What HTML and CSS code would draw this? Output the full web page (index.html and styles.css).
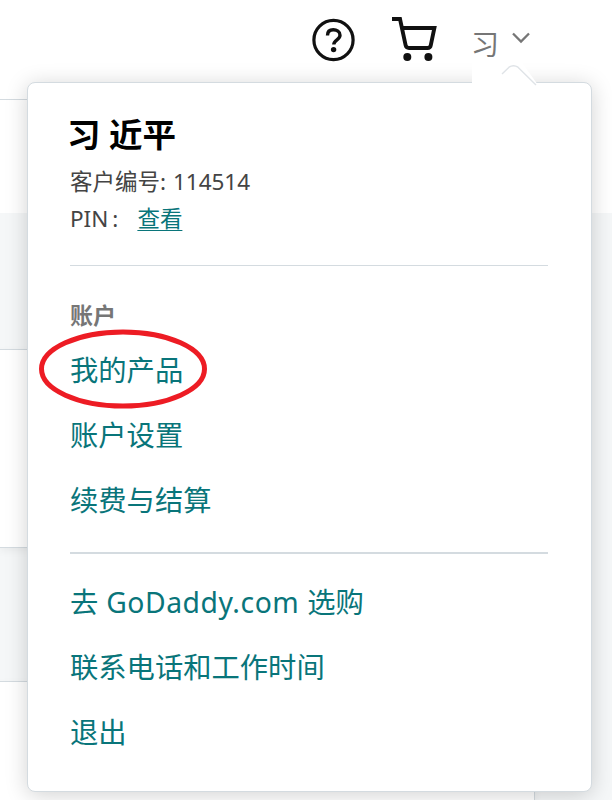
FILE: index.html
```html
<!DOCTYPE html>
<html lang="zh-CN">
<head>
<meta charset="utf-8">
<title>账户</title>
<link rel="stylesheet" href="styles.css">
</head>
<body>
<header class="topbar">
  <svg class="help" viewBox="0 0 44 44" width="44" height="44">
    <circle cx="22.500" cy="22" r="19.600" fill="none" stroke="#111" stroke-width="3.200"/>
    <path d="M16.500 17.500C16.500 13.500 19 11.800 22.300 11.800s6.700 2 6.700 5.400c0 4.600-6.200 4.600-6.200 9.400" fill="none" stroke="#111" stroke-width="3.400"/>
    <circle cx="22.600" cy="31.600" r="2.700" fill="#111"/>
  </svg>
  <svg class="cart" viewBox="0 0 46 46" width="46" height="46">
    <path d="M0 3H8L13.600 29.200Q14.200 32 17 32H35.500Q38.300 32 38.800 29.200L42.400 12H10" fill="none" stroke="#111" stroke-width="3.900"/>
    <circle cx="15.300" cy="41" r="4" fill="#111"/>
    <circle cx="36.400" cy="41" r="4" fill="#111"/>
  </svg>
  <span class="user">习</span>
  <svg class="chevron" viewBox="0 0 18 12" width="18" height="12">
    <path d="M1 1.500L9 9.500L17 1.500" fill="none" stroke="#767676" stroke-width="2.300"/>
  </svg>
</header>
<main class="page">
  <div class="intro"></div>
  <div class="body">
    <div class="card"></div>
    <div class="card last"></div>
  </div>
</main>

<section class="menu">
  <svg class="arrow" viewBox="0 0 70 30" width="70" height="30">
    <path d="M0 0H48L66 25V30H0Z" fill="#fff"/>
    <path d="M30 14L37 7.200Q41.500 4.200 46 7.200L64 25" fill="none" stroke="#dfe3e7" stroke-width="1.400"/>
  </svg>
  <h1 class="name">习 近平</h1>
  <p class="info">客户编号: <span class="number">114514</span></p>
  <p class="info">PIN<span class="colon">:</span><a class="view" href="#">查看</a></p>
  <hr class="rule">
  <h2 class="heading">账户</h2>
  <nav class="links">
    <a href="#">我的产品</a>
    <a href="#">账户设置</a>
    <a href="#">续费与结算</a>
  </nav>
  <hr class="rule thick">
  <nav class="links more">
    <a href="#">去 <span class="latin">GoDaddy.com</span> 选购</a>
    <a href="#">联系电话和工作时间</a>
    <a href="#">退出</a>
  </nav>
  <svg class="ring" viewBox="0 0 168 80" width="168" height="80">
    <ellipse cx="84" cy="40" rx="81.500" ry="37" fill="none" stroke="#ed1c24" stroke-width="5"/>
  </svg>
</section>
</body>
</html>
```
FILE: styles.css
```css
* { box-sizing: border-box; margin: 0; padding: 0; }

body {
  position: relative;
  display: flex;
  flex-direction: column;
  width: 612px;
  height: 800px;
  overflow: hidden;
  background: #f5f7f8;
  font-family: "Noto Sans", "Noto Sans CJK SC", sans-serif;
  color: #444;
}

a { color: #09757a; text-decoration: none; }

.topbar {
  display: flex;
  align-items: flex-start;
  height: 99px;
  padding: 16px 0 0 311px;
  background: #fff;
}
.help { margin-top: 2px; }
.cart { margin-left: 37px; }
.user {
  margin: 7px 0 0 33px;
  width: 28px;
  font-family: "Noto Sans CJK SC", sans-serif;
  font-size: 28px;
  line-height: 40px;
  color: #767676;
}
.chevron { margin: 16px 0 0 13px; }

.page { display: flex; flex: 1; flex-direction: column; min-height: 0; }
.intro {
  height: 114px;
  background: linear-gradient(#d4dbe0, #d4dbe0) 0 0 / 535px 1px no-repeat #fff;
}
.body { display: flex; flex: 1; flex-direction: column; padding-top: 136px; }
.card {
  width: 535px;
  height: 199px;
  border: solid #d4dbe0;
  border-width: 1px 1px 1px 0;
  background: #fff;
  box-shadow: 0 3px 8px rgba(0, 0, 0, .05);
}
.last { flex: 1; height: auto; margin-top: 133px; border-bottom: 0; }

.menu {
  position: absolute;
  left: 27px;
  top: 82px;
  width: 565px;
  height: 710px;
  padding: 28px 43px 0 42px;
  border: 1px solid #d4dbe0;
  border-radius: 8px;
  background: #fff;
  box-shadow: 0 3px 22px rgba(0, 0, 0, .18);
}
.arrow { position: absolute; left: 444px; top: -23px; }
.name {
  height: 44px;
  margin: 0 0 8px -3px;
  font: 700 33.500px/44px "Noto Sans CJK SC", sans-serif;
  word-spacing: 1px;
  color: #000;
}
.info {
  height: 37px;
  font-size: 22.500px;
  line-height: 37px;
  font-weight: 400;
  white-space: nowrap;
}
.number { margin-left: 1px; }
.colon { margin: 0 19px 0 4px; }
.view { text-decoration: underline; text-underline-offset: 3px; text-decoration-thickness: 1px; }
.rule { height: 1px; margin-top: 28px; border: 0; background: #d4dbe0; }
.thick { height: 2px; margin-top: 19px; }
.heading {
  height: 30px;
  margin-top: 33px;
  font: 700 23px/30px "Noto Sans CJK SC", sans-serif;
  color: #767676;
}
.links { display: flex; flex-direction: column; margin-top: 9px; }
.links a { height: 65px; font-size: 28.300px; line-height: 65px; white-space: nowrap; }
.more { margin-top: 16px; }
.latin { margin: 0 .5px; letter-spacing: .55px; }
.ring { position: absolute; left: 11px; top: 246px; }
```
